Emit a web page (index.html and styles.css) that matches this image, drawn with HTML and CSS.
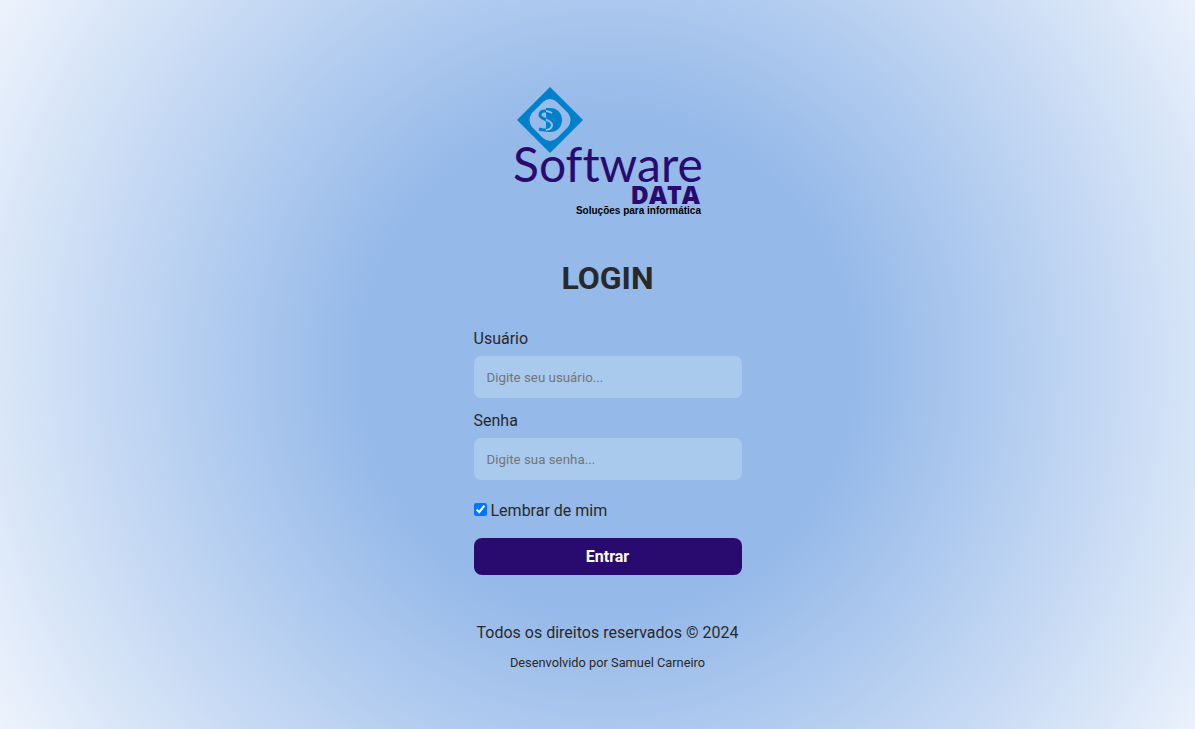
FILE: index.html
```
<!DOCTYPE html>
<html lang="pt-BR">
<head>
  <meta charset="utf-8">
  <meta name="viewport" content="width=device-width, initial-scale=1">
  <title>Login - Software Data</title>
  <link rel="stylesheet" href="styles.css">
</head>
<body class="page">
  <main class="login">
    <svg class="logo" viewBox="0 0 190 132" role="img" aria-label="Software Data - Soluções para informática">
      <defs>
        <clipPath id="left-half"><path d="M20 18H33V48H20Z"/></clipPath>
        <clipPath id="right-half"><path d="M33 18H50V48H33Z"/></clipPath>
      </defs>
      <path class="logo-blue" fill-rule="evenodd" d="M37 0 70 33 37 66 4 33ZM30 15 19 26Q14 33 19 40L30 51Q37 57 44 51L55 40Q60 33 55 26L44 15Q37 9 30 15Z"/>
      <path class="logo-blue" d="M33 21H37C53 21 53 45 37 45H33Z"/>
      <path class="logo-s" clip-path="url(#left-half)" d="M39 26C34 23 27 23 27 28C27 33 39 32 39 38C39 43 32 44 26 42"/>
      <path class="logo-s-cut" clip-path="url(#right-half)" d="M39 26C34 23 27 23 27 28C27 33 39 32 39 38C39 43 32 44 26 42"/>
      <text class="logo-name" x="0" y="95">Software</text>
      <text class="logo-data" x="187" y="117" text-anchor="end">DATA</text>
      <text class="logo-tagline" x="188" y="127" text-anchor="end">Soluções para informática</text>
    </svg>
    <h1 class="title">LOGIN</h1>
    <form class="form">
      <label class="label" for="user">Usuário</label>
      <input class="field" id="user" type="text" placeholder="Digite seu usuário...">
      <label class="label" for="password">Senha</label>
      <input class="field" id="password" type="password" placeholder="Digite sua senha...">
      <div class="remember">
        <input class="check" id="remember" type="checkbox" checked>
        <label for="remember">Lembrar de mim</label>
      </div>
      <button class="submit" type="submit">Entrar</button>
    </form>
    <footer class="footer">
      <p class="rights">Todos os direitos reservados © 2024</p>
      <p class="credit">Desenvolvido por Samuel Carneiro</p>
    </footer>
  </main>
</body>
</html>
```
FILE: styles.css
```
* {
  box-sizing: border-box;
  margin: 0;
}

.page {
  min-height: 100vh;
  padding-left: 20px;
  display: flex;
  align-items: center;
  justify-content: center;
  background: radial-gradient(circle at calc(50% + 10px) 50%, #95b9e9 35%, #edf3fc 100%);
  color: #292929;
  font: 16px/19px Roboto, sans-serif;
}

.login {
  width: 268px;
  padding: 60px 0 30px;
  display: flex;
  flex-direction: column;
  align-items: center;
}

.logo {
  width: 190px;
  height: 132px;
  overflow: visible;
}

.logo-blue {
  fill: #0080cb;
}

.logo-s {
  fill: none;
  stroke: #0080cb;
  stroke-width: 3;
}

.logo-s-cut {
  fill: none;
  stroke: #98bceb;
  stroke-width: 2;
}

.logo-name {
  fill: #290b70;
  font: 48px Lato, sans-serif;
  font-variant-ligatures: none;
}

.logo-data {
  fill: #290b70;
  font: 800 25px "Open Sans", sans-serif;
}

.logo-tagline {
  fill: #000;
  font: bold 10px "Liberation Sans Narrow", "Liberation Sans", sans-serif;
}

.title {
  margin-top: 40px;
  font-size: 32px;
  line-height: 38px;
}

.form {
  width: 100%;
  margin-top: 32px;
  display: flex;
  flex-direction: column;
}

.label {
  margin-bottom: 8px;
}

.field {
  width: 100%;
  height: 42px;
  margin-bottom: 13px;
  padding: 0 13px;
  border: 0;
  border-radius: 7px;
  background: #a9c9ed;
  color: #292929;
  font-family: Roboto, sans-serif;
}

.field::placeholder {
  color: #757575;
}

.remember {
  margin: 8px 0 18px;
  display: flex;
  align-items: center;
  gap: 4px;
}

.check {
  width: 13px;
  height: 13px;
  margin-bottom: 2px;
}

.submit {
  height: 37px;
  border: 0;
  border-radius: 8px;
  background: #290b70;
  color: #fff;
  font: bold 16px Roboto, sans-serif;
}

.footer {
  margin-top: 48px;
  text-align: center;
}

.credit {
  margin-top: 11px;
  font-size: 0.8em;
}
```
